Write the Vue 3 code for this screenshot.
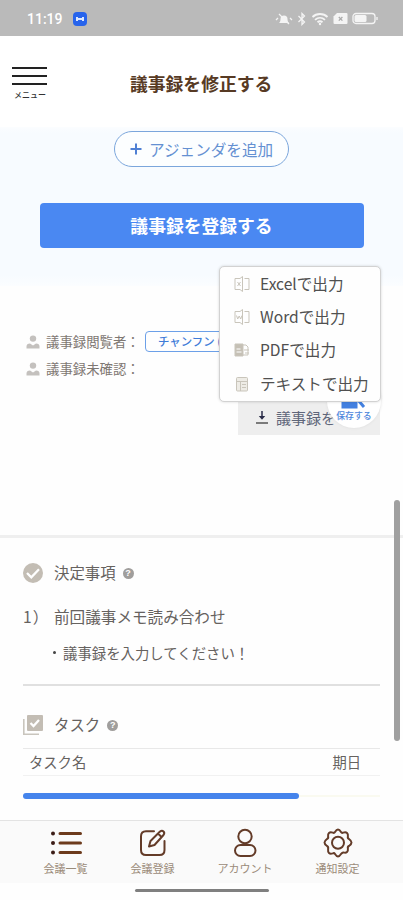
<template>
  <div class="screen">
    <!-- ステータスバー -->
    <div class="status">
      <span class="time">11:19</span>
      <span class="app-badge">
        <svg viewBox="0 0 14 14" width="14" height="14"><path d="M4 5v4M10 5v4M4 7h6" /></svg>
      </span>
      <div class="status-icons">
        <svg class="bell" viewBox="0 0 18 14" width="18" height="14">
          <path class="fill" d="M4 11c1-1 1.500-2 1.500-4a3.500 3.500 0 0 1 7 0c0 2 .5 3 1.500 4z" />
          <path d="M1 8l2-2M15 6l2 2M4 2l10 10" />
        </svg>
        <svg viewBox="0 0 10 14" width="10" height="14"><path d="M1.500 4l6 6L5 12.500v-11L7.500 4l-6 6" /></svg>
        <svg viewBox="0 0 18 14" width="18" height="14">
          <path class="wave" d="M1.500 5c4-4 11-4 15 0M4 7.800c3-2.700 7-2.700 10 0M6.500 10.300c1.500-1.300 3.500-1.300 5 0" />
          <circle class="fill" cx="9" cy="12" r="1.200" />
        </svg>
        <svg viewBox="0 0 15 13" width="15" height="13">
          <path class="fill" d="M4 1h9.500q1 0 1 1v9q0 1-1 1h-12q-1 0-1-1V4.500z" />
          <path class="cross" d="M5.800 5l3.600 3.600M9.400 5L5.800 8.600" />
        </svg>
        <svg viewBox="0 0 26 13" width="26" height="13">
          <rect x="1" y="1.500" width="22" height="10" rx="3" />
          <rect class="fill" x="2.500" y="3" width="12" height="7" rx="1.500" />
          <path d="M25 5v3" />
        </svg>
      </div>
    </div>

    <header class="header">
      <div class="menu-btn">
        <i></i><i></i><i></i>
        <span>メニュー</span>
      </div>
      <h1>議事録を修正する</h1>
    </header>

    <section class="actions">
      <button class="add-btn">
        <svg viewBox="0 0 12 12" width="12" height="12"><path d="M6 .5v11M.5 6h11" /></svg>
        <span>アジェンダを追加</span>
      </button>
      <button class="submit-btn">議事録を登録する</button>
    </section>

    <section class="viewers">
      <div v-for="row in viewers" :key="row.label" class="viewer-row">
        <svg viewBox="0 0 14 14" width="14" height="14">
          <circle cx="7" cy="3.600" r="3.200" />
          <path d="M.5 13.500v-2Q.5 8.500 4 8.500L7 10.500l3-2q3.500 0 3.500 3v2z" />
        </svg>
        <span class="viewer-label">{{ row.label }}</span>
        <span v-if="row.name" class="chip">{{ row.name }}</span>
      </div>

      <div class="save-btn">
        <svg viewBox="0 0 14 14" width="14" height="14">
          <path class="arrow" d="M7 1v7" />
          <path class="head" d="M3.800 6h6.400L7 9.800z" />
          <path class="tray" d="M1 13h12" />
        </svg>
        <span>議事録を</span>
      </div>
      <div class="fab">
        <svg viewBox="0 0 26 20" width="26" height="20">
          <path class="fill" d="M2 2h13v15H2z" />
          <path d="M17 10l6 7" />
        </svg>
        <span>保存する</span>
      </div>

      <!-- 出力形式メニュー -->
      <ul class="export-menu">
        <li v-for="item in exports" :key="item.label">
          <svg v-if="item.icon === 'text'" viewBox="0 0 16 16" width="16" height="16">
            <rect class="pale" x="2.500" y="1.500" width="11" height="13.500" rx="1" />
            <path d="M2.500 5.500h11M6.500 5.500V15M8 8.500h4M8 11.500h4" />
          </svg>
          <svg v-else-if="item.icon === 'pdf'" viewBox="0 0 16 16" width="16" height="16">
            <path class="solid" d="M1 2h8v12H1z" />
            <path d="M9 3h3l2 2v8H9M10 8h5M11 11h4" />
            <path class="white" d="M2.500 7h4M2.500 10h5" />
          </svg>
          <svg v-else viewBox="0 0 16 16" width="16" height="16">
            <path d="M1 2.500h5M1 2.500v11h5M8.500 .5v15M10.500 2.500h4.500v11h-4.500M6 2.500l2.500-2M6 13.500l2.500 2" />
            <path v-if="item.icon === 'excel'" d="M3.500 6l3 4M6.500 6l-3 4" />
            <path v-else d="M2.500 6.500l1.200 3.500 1.500-3 1.500 3 1.300-3.500" />
          </svg>
          <span>{{ item.label }}</span>
        </li>
      </ul>
    </section>

    <section class="decisions">
      <div class="section-title">
        <svg class="title-icon" viewBox="0 0 20 20" width="20" height="20">
          <circle cx="10" cy="10" r="10" />
          <path d="M4 10l4.300 4.300 7.700-8" />
        </svg>
        <h2>決定事項</h2>
        <span class="help">?</span>
      </div>
      <div class="agenda"><span class="no">1）</span>前回議事メモ読み合わせ</div>
      <div class="memo"><b></b>議事録を入力してください！</div>
    </section>

    <section class="tasks">
      <div class="section-title">
        <svg class="title-icon" viewBox="0 0 20 20" width="20" height="20">
          <path class="back" d="M.8 4v15.200H16" />
          <rect x="4" y="0" width="16" height="16" rx="1" />
          <path d="M7.500 8l3 3 5.500-6" />
        </svg>
        <h2>タスク</h2>
        <span class="help">?</span>
      </div>
      <div class="task-head"><span>タスク名</span><span>期日</span></div>
      <div class="progress"><div class="bar" :style="{ width: progress + '%' }"></div></div>
    </section>

    <nav class="tabs">
      <div class="tab">
        <svg viewBox="0 0 32 30" width="32" height="30">
          <path class="thick" d="M10 5.500h20.500M10 15h20.500M10 24.500h20.500" />
          <circle class="dot" cx="3" cy="5.500" r="2" /><circle class="dot" cx="3" cy="15" r="2" /><circle class="dot" cx="3" cy="24.500" r="2" />
        </svg>
        <span>会議一覧</span>
      </div>
      <div class="tab tab-edit">
        <svg viewBox="0 0 28 30" width="28" height="30">
          <path d="M15 3.300H7Q2 3.300 2 8.300V22q0 5 5 5h13.500q5 0 5-5v-9" />
          <path d="M10 18.500l1.500-5.500L21 3.500q2-1.500 3.500 0t0 3.500L15.500 17zM19 5.500l3.500 3.500" />
        </svg>
        <span>会議登録</span>
      </div>
      <div class="tab tab-account">
        <svg viewBox="0 0 28 30" width="28" height="30">
          <circle cx="14" cy="8.500" r="6.700" />
          <rect x="4" y="17" width="20.500" height="11" rx="5.500" />
        </svg>
        <span>アカウント</span>
      </div>
      <div class="tab tab-setting">
        <svg viewBox="0 0 30 30" width="30" height="30">
          <path d="M12 4Q15-.8 18 4q.8 1.300 2.200.6 5.300-1.400 4.700 4.200-.5 1.500 1.100 2.200 5 3.500 0 7-1.600.7-1.100 2.200.6 5.600-4.700 4.200Q18.800 24.700 18 26q-3 4.800-6 0-.8-1.300-2.200-.6-5.300 1.400-4.700-4.200Q5.600 18.700 4 18q-5-3.500 0-7 1.600-.7 1.100-2.200-.6-5.600 4.700-4.200Q11.200 5.300 12 4z" />
          <circle cx="15" cy="14.800" r="6" />
        </svg>
        <span>通知設定</span>
      </div>
    </nav>
    <div class="home"><i></i></div>

    <div class="scrollbar"></div>
  </div>
</template>

<script setup>
import { ref } from 'vue'

const viewers = [
  { label: '議事録閲覧者：', name: 'チャンフン (' },
  { label: '議事録未確認：', name: '' },
]

const exports = [
  { label: 'Excelで出力', icon: 'excel' },
  { label: 'Wordで出力', icon: 'word' },
  { label: 'PDFで出力', icon: 'pdf' },
  { label: 'テキストで出力', icon: 'text' },
]

const progress = ref(77.3)   // 横スクロール位置の幅（%）
</script>

<style>
body { margin: 0; background: #fff; }
</style>

<style scoped>
.screen {
  position: relative;
  width: 403px;
  height: 900px;
  overflow: hidden;
  display: flex;
  flex-direction: column;
  background: #fefefe;
  color: #66625f;
  font-family: "Noto Sans CJK JP", sans-serif;
}
.screen * { box-sizing: border-box; }
svg { display: block; flex-shrink: 0; fill: none; }
section, header, nav, .status { flex-shrink: 0; }

.status { height: 36px; padding: 1px 25px 0 27px; display: flex; align-items: center; background: #bababa; color: #fff; }
.time { width: 46px; font: 500 14px Roboto, sans-serif; }
.app-badge { border-radius: 4px; background: #2764ec; }
.app-badge svg { stroke: #dce8ff; stroke-width: 2; }
.status-icons { margin-left: auto; display: flex; align-items: center; gap: 4px; }
.status-icons svg { stroke: #f4f4f4; stroke-width: 1.3; }
.status-icons .wave { stroke-width: 1.8; }
.status-icons .fill { fill: #f4f4f4; stroke: none; }
.status-icons .cross { stroke: #aaa; }

.header { height: 91px; display: flex; background: #fff; }
.menu-btn { width: 130px; padding: 31px 0 0 12px; display: flex; flex-direction: column; gap: 6px; }
.menu-btn i { width: 35px; height: 2px; background: #222; }
.menu-btn span { margin-top: -1px; padding-left: 2px; color: #333; font-size: 8px; line-height: 10px; font-weight: 500; }
h1 { margin: 0; color: #573a24; font-size: 17.800px; line-height: 24px; font-weight: 700; padding-top: 35px; white-space: nowrap; }

.actions {
  height: 159px;
  padding-top: 4px;
  display: flex;
  flex-direction: column;
  align-items: center;
  gap: 36px;
  background: linear-gradient(#fbfdff, #f7fbff 6px, #f7fbff 148px, #fbfdff);
}
button { margin: 0; font-family: inherit; white-space: nowrap; }
.add-btn {
  width: 175px;
  height: 36px;
  padding: 0 0 0 15px;
  display: flex;
  align-items: center;
  gap: 7px;
  border: 1px solid #7ba6dc;
  border-radius: 18px;
  background: #fcfeff;
  color: #6490d2;
  font-size: 15.600px;
}
.add-btn svg { stroke: #4f80d4; stroke-width: 2; }
.submit-btn { width: 324px; height: 45px; padding: 0 0 1px; border: 0; border-radius: 4px; background: #4a88f2; color: #fff; font-size: 17.800px; font-weight: 700; }

.viewers { position: relative; height: 248px; padding: 42px 0 0 26px; }
.viewer-row { height: 27px; display: flex; align-items: center; color: #7e7873; font-size: 13.400px; }
.viewer-row svg { fill: #c4c1be; }
.viewer-label { width: 99px; padding: 0 0 1px 6px; white-space: nowrap; }
.chip { width: 100px; height: 21px; margin-left: 6px; padding-left: 12px; border: 1px solid #6ca0e8; border-radius: 4px; color: #3f7cd8; font-size: 11.400px; line-height: 19px; font-weight: 500; white-space: nowrap; }
.save-btn {
  position: absolute;
  left: 238px;
  top: 108px;
  width: 142px;
  height: 41px;
  padding: 5px 0 0 17px;
  display: flex;
  align-items: center;
  gap: 7px;
  background: #eee;
  color: #5f667a;
  font-size: 15px;
}
.save-btn .arrow { stroke: #2a2c48; stroke-width: 1.500; }
.save-btn .head { fill: #2a2c48; }
.save-btn .tray { stroke: #555; stroke-width: 1.500; }
.fab {
  position: absolute;
  left: 327px;
  top: 88px;
  width: 54px;
  height: 54px;
  padding-top: 16px;
  display: flex;
  flex-direction: column;
  align-items: center;
  border-radius: 50%;
  background: #fff;
  box-shadow: 0 0 3px #ddd;
  color: #4f87dc;
  font-size: 8.900px;
  line-height: 12px;
  font-weight: 500;
}
.fab .fill { fill: #4380e0; }
.fab path { stroke: #4380e0; stroke-width: 3; }
.export-menu {
  position: absolute;
  left: 219px;
  top: -20px;
  width: 162px;
  height: 136px;
  margin: 0;
  padding: 0 0 1px 14px;
  list-style: none;
  border: 1px solid #d2d2d2;
  border-radius: 5px;
  background: #fefefe;
  box-shadow: 0 0 3px rgba(0, 0, 0, 0.16);
}
.export-menu li { height: 33.400px; display: flex; align-items: center; gap: 10px; color: #505050; font-size: 15.600px; white-space: nowrap; }
.export-menu span { padding-bottom: 2px; }
.export-menu svg { stroke: #c9c5bb; stroke-width: 1; }
.export-menu .solid { fill: #c5c0b5; }
.export-menu .pale { fill: #eeece6; }
.export-menu .white { stroke: #fff; }

.decisions { height: 152px; margin: 0 23px; padding-top: 27px; border-bottom: 2px solid #e0e0e0; position: relative; }
.decisions::before { content: ""; position: absolute; left: -23px; right: -23px; top: 1px; height: 3px; background: #efefef; }
.section-title { display: flex; align-items: center; height: 24px; }
.title-icon { fill: #c3bdb4; }
.title-icon path { fill: none; stroke: #fff; stroke-width: 2.300; }
.title-icon .back { stroke: #c9c5bd; stroke-width: 1.600; }
h2 { margin: 0 7px 0 11px; font-size: 15.400px; line-height: 22px; padding-bottom: 2px; font-weight: 400; }
.help { width: 11px; height: 11px; border-radius: 50%; background: #a09e9c; color: #fff; font: 700 9px/11px "Liberation Sans", sans-serif; text-align: center; }
.agenda { display: flex; height: 24px; margin-top: 19px; font-size: 15.600px; line-height: 24px; }
.agenda .no { width: 31px; letter-spacing: 1px; white-space: nowrap; }
.memo { display: flex; align-items: center; height: 24px; margin-top: 12px; padding-left: 30px; font-size: 14.400px; }
.memo b { width: 3px; height: 3px; margin-right: 7px; border-radius: 50%; background: #444; }

.tasks { height: 134px; margin: 0 23px; padding-top: 27px; }
.task-head { display: flex; justify-content: space-between; align-items: center; height: 28px; margin-top: 11px; padding: 0 19px 1px 6px; border-top: 1px solid #e8e8e8; border-bottom: 1px solid #f1f1f1; font-size: 14.300px; }
.progress { height: 6px; margin-top: 17px; display: flex; align-items: center; background: linear-gradient(#fafaf0, #fafaf0) center / 100% 2px no-repeat; }
.bar { height: 6px; border-radius: 3px; background: #4584ec; }

.tabs { height: 63px; padding: 0 19px; display: grid; grid-template-columns: 93px 81px 104px 81px; border-top: 1px solid #e3e3e3; background: #fafafa; }
.tab { display: flex; flex-direction: column; align-items: center; padding-top: 7px; color: #9a8b79; font-size: 11px; line-height: 16px; white-space: nowrap; }
.tab span { margin-top: 2px; }
.tab svg { stroke: #633b28; stroke-width: 2; stroke-linejoin: round; stroke-linecap: round; }
.tab .thick { stroke: #6c3a1c; stroke-width: 3; }
.tab .dot { fill: #3b1c16; stroke: none; }

.home { padding-top: 6px; display: flex; justify-content: center; }
.home i { width: 134px; height: 3px; border-radius: 2px; background: #7f7f7f; }

.scrollbar { position: absolute; left: 394px; top: 500px; width: 6px; height: 241px; border-radius: 3px; background: #a0a0a0; }
</style>
